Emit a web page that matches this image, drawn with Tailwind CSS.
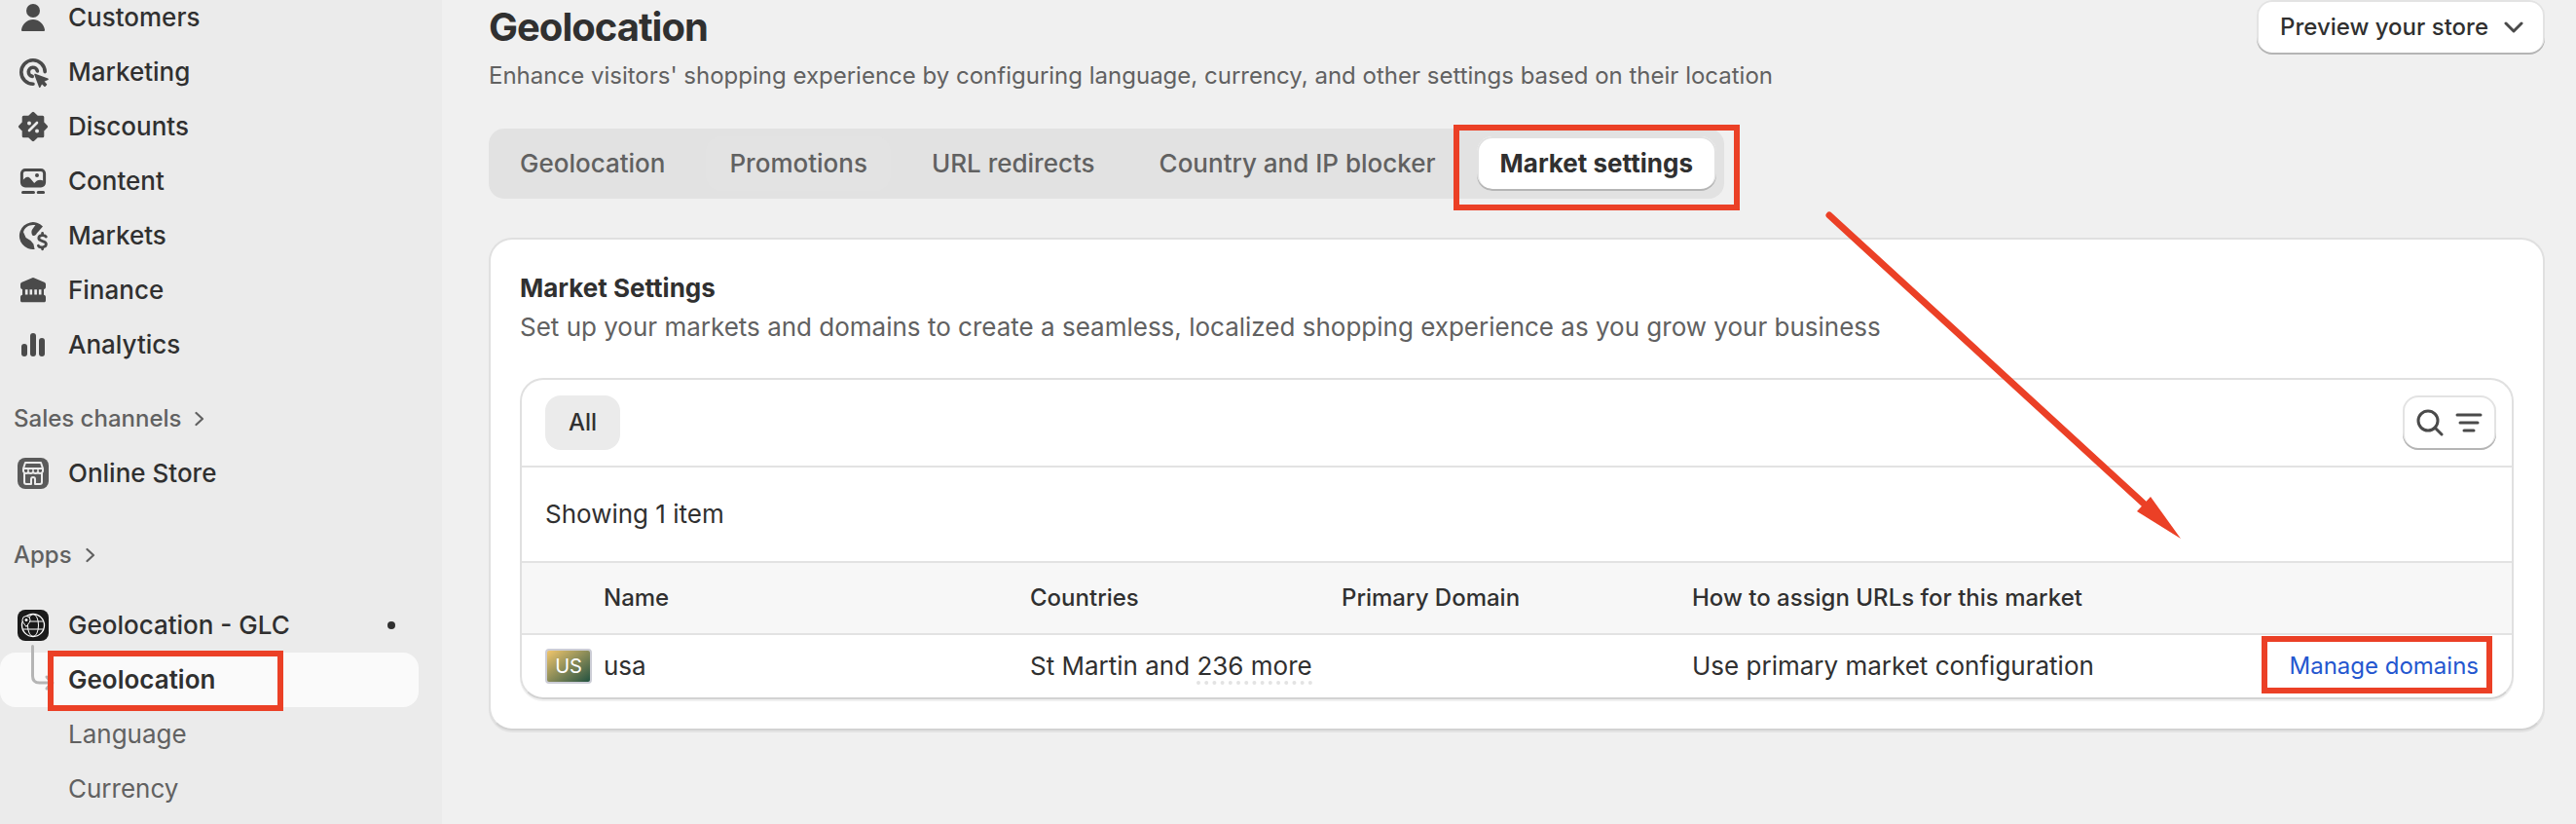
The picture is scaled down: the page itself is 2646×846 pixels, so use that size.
<!DOCTYPE html>
<html lang="en">
<head>
    <meta charset="UTF-8" />
    <title>Geolocation - Market settings</title>
    <meta name="viewport" content="width=device-width, initial-scale=1" />
    <script src="https://cdn.jsdelivr.net/npm/@tailwindcss/browser@4"></script>
</head>
<body class="flex min-h-screen overflow-x-hidden bg-[#f0f0f0] font-['Inter',sans-serif] text-[26px] leading-10 text-[#303030]">

    <!-- Sidebar -->
    <aside class="w-[454px] shrink-0 overflow-hidden bg-[#ebebeb]">
        <nav class="-mt-2.5 font-medium">
            <a href="#" class="flex h-14 items-center gap-4 pl-3.5">
                <svg class="size-10 fill-[#4a4a4a]" viewBox="0 0 20 20"><circle cx="10" cy="6.5" r="3.5" /><path d="M4 16.2C4.600 13.200 7 11 10 11s5.400 2.200 6 5.200c.1.500-.3.800-.7.800H4.700c-.4 0-.8-.3-.7-.8Z" /></svg>
                Customers
            </a>
            <a href="#" class="flex h-14 items-center gap-4 pl-3.5">
                <svg class="size-10 fill-none stroke-[#4a4a4a]" viewBox="0 0 20 20" stroke-width="1.8" stroke-linecap="round"><path d="M16.100 9.800A6.100 6.100 0 1 0 10 16.100" /><path d="M12.200 9.500A2.300 2.300 0 1 0 9.600 12.200" /><path d="M11 11.200l6.500 2.400-2.300 1.100 1.500 1.700-.7.700-1.600-1.500-1 2Z" fill="#4a4a4a" stroke-width=".8" stroke-linejoin="round" /></svg>
                Marketing
            </a>
            <a href="#" class="flex h-14 items-center gap-4 pl-3.5">
                <svg class="size-10 fill-[#4a4a4a]" viewBox="0 0 20 20"><path d="M10 3.200 12 5.100h2.900V8L16.800 10l-1.900 2v2.900H12L10 16.800 8 14.900H5.100V12L3.200 10l1.900-2V5.100H8Z" stroke="#4a4a4a" stroke-width="1.500" stroke-linejoin="round" /><path d="M8 12l4-4" fill="none" stroke="#ebebeb" stroke-width="1.300" stroke-linecap="round" /><circle cx="8" cy="8.200" r="1" fill="#ebebeb" /><circle cx="12" cy="12.200" r="1" fill="#ebebeb" /></svg>
                Discounts
            </a>
            <a href="#" class="flex h-14 items-center gap-4 pl-3.5">
                <svg class="size-10 fill-[#4a4a4a]" viewBox="0 0 20 20"><rect x="4.200" y="4.250" width="11.600" height="8.200" rx="1.800" fill="none" stroke="#4a4a4a" stroke-width="1.500" /><path d="M4 10.500C5.600 7.900 7.400 7 8.700 8.700L10.600 11C12 9.200 13.800 8.800 15.500 10v2.500H4.500Z" /><circle cx="12" cy="7" r="1" /><path d="M4.750 15.800h5.500M12.600 15.800h2.700" stroke="#4a4a4a" stroke-width="1.500" stroke-linecap="round" /></svg>
                Content
            </a>
            <a href="#" class="flex h-14 items-center gap-4 pl-3.5">
                <svg class="size-10" viewBox="0 0 20 20" fill="#4a4a4a"><path d="M15 5.200A7 7 0 1 0 10.800 17L10.200 14.200 8.700 12.500 6.300 11 5 8.100C5.600 5.900 7.600 4.500 10 4.500h1.200L9.600 6.800C9 7.500 9.100 9 9.600 9.700c.8.500 1.800.3 2.200-.8Z" /><path d="M16.600 10.500c-.4-.8-3.700-1.200-3.700.8s3.800 1 3.800 3-3.500 2-4 .8M14.800 8.700v1M14.800 15.900v1" fill="none" stroke="#4a4a4a" stroke-width="1.400" stroke-linecap="round" /></svg>
                Markets
            </a>
            <a href="#" class="flex h-14 items-center gap-4 pl-3.5">
                <svg class="size-10 fill-[#4a4a4a]" viewBox="0 0 20 20"><path d="M9.300 3.700a1.500 1.500 0 0 1 1.400 0l5 2.200c.5.200.8.600.8 1.100v1.200c0 .7-.4 1.100-1 1.300v2.900c.6.100 1 .5 1 1.100v1.700c0 .6-.3.900-.9.900H4.400c-.6 0-.9-.3-.9-.9v-1.700c0-.6.4-1 1-1.100V9.500c-.6-.2-1-.6-1-1.300V7c0-.5.300-.9.800-1.100Z" /><path d="M6.600 9.600v2.700M8.900 9.600v2.700M11.300 9.600v2.700M13.600 9.600v2.700" stroke="#ebebeb" stroke-width="1.300" /></svg>
                Finance
            </a>
            <a href="#" class="flex h-14 items-center gap-4 pl-3.5">
                <svg class="size-10 fill-[#4a4a4a]" viewBox="0 0 20 20"><rect x="4" y="9.500" width="3" height="6.500" rx="1.500" /><rect x="8.500" y="4" width="3" height="12" rx="1.500" /><rect x="13" y="6.500" width="3" height="9.500" rx="1.500" /></svg>
                Analytics
            </a>

            <a href="#" class="mt-5 flex h-14 items-center gap-3.5 pl-3.5 text-2xl text-[#616161]">
                Sales channels
                <svg class="h-4 w-2.5 fill-none stroke-[#616161]" viewBox="0 0 10 16" stroke-width="2.200" stroke-linecap="round" stroke-linejoin="round"><path d="M1.500 2l6.500 6-6.500 6" /></svg>
            </a>
            <a href="#" class="flex h-14 items-center gap-4 pl-3.5">
                <svg class="size-10" viewBox="0 0 40 40" fill="none" stroke="#ebebeb" stroke-width="2" stroke-linejoin="round"><rect x="4" y="4" width="32" height="32" rx="8" fill="#5a5a5a" stroke="none" /><path d="M12 9h16l2 6v3a3 3 0 0 1-5 1 3.500 3.500 0 0 1-5 0 3.500 3.500 0 0 1-5 0 3 3 0 0 1-5-1v-3Z" /><path d="M10.500 15h19" /><path d="M15 15v4M20 15v4M25 15v4" stroke-width="1.500" /><path d="M11 20v9q0 2 2 2h5v-5q0-2 2-2t2 2v5h5q2 0 2-2v-9" /></svg>
                Online Store
            </a>

            <a href="#" class="mt-7 flex h-14 items-center gap-3.5 pl-3.5 text-2xl text-[#616161]">
                Apps
                <svg class="h-4 w-2.5 fill-none stroke-[#616161]" viewBox="0 0 10 16" stroke-width="2.200" stroke-linecap="round" stroke-linejoin="round"><path d="M1.500 2l6.500 6-6.500 6" /></svg>
            </a>
            <a href="#" class="mt-4 flex h-14 items-center gap-4 pr-12 pl-3.5">
                <svg class="size-10" viewBox="0 0 40 40" fill="none" stroke="#fff"><rect x="4" y="4" width="32" height="32" rx="8" fill="#1a1a1a" stroke="none" /><circle cx="20" cy="20" r="11.500" stroke-width="1.300" /><ellipse cx="20" cy="20" rx="5.500" ry="11.500" /><path d="M9.500 16h21M9.500 24h21" /><path d="M13 21.500c-2.500-3.500-4-5-4-7a4 4 0 0 1 8 0c0 2-1.500 3.500-4 7Z" fill="#1a1a1a" /><circle cx="13" cy="14.500" r="1.500" fill="#fff" stroke="none" /></svg>
                Geolocation - GLC
                <span class="ml-auto size-2 rounded-full bg-[#303030]"></span>
            </a>
            <a href="#" class="relative mr-6 flex h-14 items-center rounded-2xl bg-[#fafafa] pl-[70px] font-semibold">
                <svg class="absolute -top-2 left-8 h-14 w-6 fill-none stroke-[#b5b5b5]" viewBox="0 0 24 56" stroke-width="3" stroke-linecap="round"><path d="M1.500 1.500V32q0 7 7 7H22M16 33l5 6-5 6" /></svg>
                Geolocation
                <span class="absolute -top-0.5 -bottom-1 left-[49px] w-[242px] border-6 border-[#eb4026]"></span>
            </a>
            <a href="#" class="flex h-14 items-center pl-[70px] font-normal text-[#616161]">Language</a>
            <a href="#" class="flex h-14 items-center pl-[70px] font-normal text-[#616161]">Currency</a>
        </nav>
    </aside>

    <!-- Content -->
    <main class="relative min-w-0 grow pr-8 pl-12">
        <header class="flex items-start justify-between">
            <div class="pt-1.5">
                <h1 class="text-[40px] font-bold leading-[44px] tracking-tight">Geolocation</h1>
                <p class="mt-2 text-2xl leading-10 text-[#616161]">Enhance visitors' shopping experience by configuring language, currency, and other settings based on their location</p>
            </div>
            <button class="flex h-14 items-center gap-4 rounded-2xl bg-white pr-[22px] pl-6 text-2xl font-medium shadow-[inset_0_-2px_0_#b5b5b5,inset_0_0_0_2px_#e3e3e3]">
                Preview your store
                <svg class="h-3 w-5 fill-none stroke-[#4a4a4a]" viewBox="0 0 20 12" stroke-width="3" stroke-linecap="round" stroke-linejoin="round"><path d="M2 2l8 8 8-8" /></svg>
            </button>
        </header>

        <div class="mt-[34px] flex">
            <div class="flex gap-[18px] rounded-2xl bg-[#e2e2e2] p-2 font-medium text-[#616161]">
                <button class="h-14 rounded-2xl px-6">Geolocation</button>
                <button class="h-14 rounded-2xl bg-[#e3e3e3] px-6">Promotions</button>
                <button class="h-14 rounded-2xl px-6">URL redirects</button>
                <button class="h-14 rounded-2xl px-6">Country and IP blocker</button>
                <button class="relative h-14 rounded-2xl bg-white px-6 font-bold text-[#303030] shadow-[inset_0_-2px_0_#b5b5b5,inset_0_0_0_2px_#e2e2e2]">
                    Market settings
                    <span class="absolute -top-3 -right-6 -bottom-5 -left-6 border-6 border-[#eb4026]"></span>
                </button>
            </div>
        </div>

        <section class="mt-10 rounded-3xl border-2 border-[#e0e0e0] border-b-[#d2d2d2] bg-white p-[30px] shadow-[0_2px_0_#e3e3e3]">
            <h2 class="font-bold">Market Settings</h2>
            <p class="text-[#616161]">Set up your markets and domains to create a seamless, localized shopping experience as you grow your business</p>

            <div class="mt-8 overflow-hidden rounded-3xl border-2 border-[#e0e0e0] border-b-[#d2d2d2] shadow-[0_2px_0_#f0f0f0]">
                <div class="flex h-[90px] items-center justify-between border-b-2 border-[#e3e3e3] pr-4 pl-6">
                    <button class="h-14 rounded-2xl bg-[#ebebeb] px-6 text-2xl font-medium">All</button>
                    <button aria-label="Search and filter" class="flex h-14 items-center gap-3 rounded-2xl bg-white px-3.5 shadow-[inset_0_-2px_0_#b5b5b5,inset_0_0_0_2px_#e3e3e3]">
                        <svg class="size-7 fill-none stroke-[#4a4a4a]" viewBox="0 0 28 28" stroke-width="3" stroke-linecap="round"><circle cx="12" cy="12" r="10" /><path d="M19 19l7 7" /></svg>
                        <svg class="size-7 fill-none stroke-[#4a4a4a]" viewBox="0 0 28 28" stroke-width="3" stroke-linecap="round"><path d="M2 6h24M5 14h18M9 22h10" /></svg>
                    </button>
                </div>
                <p class="px-6 py-7">Showing 1 item</p>

                <table class="w-full table-fixed text-left">
                    <colgroup>
                        <col class="w-[84px]" />
                        <col class="w-[438px]" />
                        <col class="w-[320px]" />
                        <col class="w-[360px]" />
                        <col class="w-[480px]" />
                        <col class="w-[362px]" />
                    </colgroup>
                    <thead class="border-y-2 border-[#e3e3e3] bg-[#f7f7f7] text-2xl">
                        <tr class="h-[74px]">
                            <th></th>
                            <th class="font-medium">Name</th>
                            <th class="font-medium">Countries</th>
                            <th class="font-medium">Primary Domain</th>
                            <th class="font-medium">How to assign URLs for this market</th>
                            <th></th>
                        </tr>
                    </thead>
                    <tbody>
                        <tr class="h-[65px]">
                            <td class="pl-6"><span class="flex h-9 w-12 items-center justify-center rounded-sm border-2 border-[#cccdd6] bg-linear-to-br from-[#f2c66b] to-[#1f5240] text-xl text-white">US</span></td>
                            <td>usa</td>
                            <td class="whitespace-nowrap">St Martin and <span class="border-b-4 border-dotted border-[#e3e3e3]">236 more</span></td>
                            <td></td>
                            <td>Use primary market configuration</td>
                            <td class="pr-[34px] text-right text-2xl">
                                <a href="#" class="relative text-[#2457cf]">Manage domains<span class="absolute -top-4 -right-3.5 -bottom-3.5 -left-7 border-6 border-[#eb4026]"></span></a>
                            </td>
                        </tr>
                    </tbody>
                </table>
            </div>
        </section>

        <!-- Arrow pointing at the manage link -->
        <svg class="pointer-events-none absolute top-[216px] right-[404px] h-[338px] w-[368px]" viewBox="0 0 368 338">
            <path d="M5 5 329 302" stroke="#eb4026" stroke-width="7" stroke-linecap="round" />
            <path d="M366 337 335 294 321 309Z" fill="#eb4026" />
        </svg>
    </main>
</body>
</html>
